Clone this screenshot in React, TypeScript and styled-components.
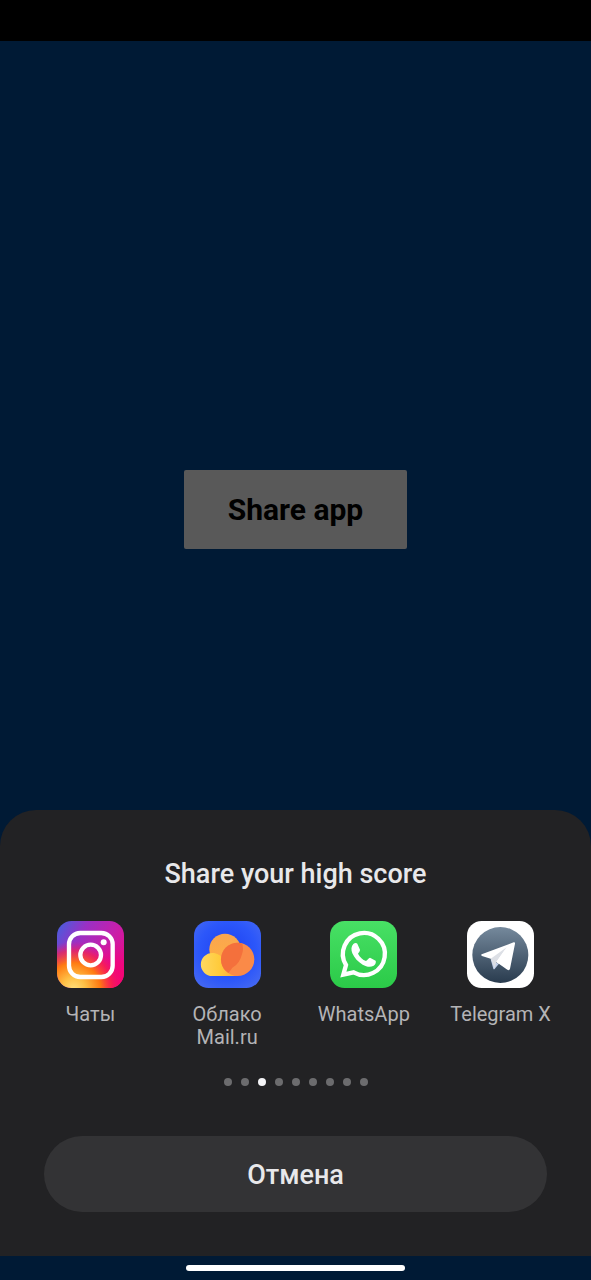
import React from 'react';
import styled, { createGlobalStyle } from 'styled-components';

const GlobalStyle = createGlobalStyle`
  *, *::before, *::after { box-sizing: border-box; }
  body {
    margin: 0;
    background: #001a35;
    font-family: Roboto, 'Noto Sans', sans-serif;
  }
  button { font-family: inherit; border: 0; cursor: pointer; }
`;

const Screen = styled.div`
  display: flex;
  flex-direction: column;
  min-height: 100vh;
`;

const StatusBar = styled.header`
  height: 41px;
  background: #000;
`;

const Page = styled.main`
  flex: 1;
  display: flex;
  align-items: center;
  justify-content: center;
  padding-top: 168px;
`;

const ShareButton = styled.button`
  padding: 21px 44px;
  border-radius: 2px;
  background: #595959;
  color: #000;
  font-size: 30px;
  font-weight: 700;
  line-height: 37px;
`;

const Sheet = styled.section`
  display: flex;
  flex-direction: column;
  padding: 48px 22px 44px;
  border-radius: 36px 36px 0 0;
  background: #222224;
`;

const Title = styled.h2`
  margin: 0 0 31px;
  color: #e8e8ea;
  font-size: 27px;
  font-weight: 500;
  line-height: 32px;
  text-align: center;
`;

const AppGrid = styled.div`
  display: grid;
  grid-template-columns: repeat(4, 1fr);
`;

const AppButton = styled.button`
  display: flex;
  flex-direction: column;
  align-items: center;
  gap: 15px;
  padding: 0;
  background: none;
  color: #b4b4b6;
  font-size: 20px;
  line-height: 23px;
`;

const AppLabel = styled.span`
  max-width: 112px;
`;

const AppIcon = styled.svg`
  display: block;
  width: 67px;
  height: 67px;
`;

const Dots = styled.div`
  display: flex;
  justify-content: center;
  gap: 9px;
  margin: 29px 0 50px;
`;

const Dot = styled.span<{ $active: boolean }>`
  width: 8px;
  height: 8px;
  border-radius: 50%;
  background: ${(p) => (p.$active ? '#f4f4f6' : '#6c6c6e')};
`;

const CancelButton = styled.button`
  margin: 0 22px;
  padding: 23px 24px 21px;
  border-radius: 38px;
  background: #333335;
  color: #e8e8ea;
  font-size: 27px;
  font-weight: 500;
  line-height: 32px;
`;

const NavBar = styled.footer`
  display: flex;
  align-items: center;
  justify-content: center;
  height: 24px;
`;

const NavHandle = styled.div`
  width: 37%;
  height: 6px;
  border-radius: 3px;
  background: #fff;
`;

const box = '35 30 201 201';

const ChatsIcon = () => (
  <AppIcon viewBox={box} aria-hidden="true">
    <defs>
      <linearGradient id="ig-base" x1="0" y1="0" x2="1" y2="0.6">
        <stop offset="0" stopColor="#3f62e0" />
        <stop offset="0.35" stopColor="#9a30c4" />
        <stop offset="0.7" stopColor="#c71fab" />
        <stop offset="1" stopColor="#e40d8c" />
      </linearGradient>
      <radialGradient id="ig-pink" cx="0.85" cy="0.95" r="0.65">
        <stop offset="0" stopColor="#fb0566" />
        <stop offset="0.5" stopColor="#f3047c" stopOpacity="0.85" />
        <stop offset="1" stopColor="#e0108f" stopOpacity="0" />
      </radialGradient>
      <radialGradient id="ig-warm" cx="0.25" cy="1.02" r="0.72">
        <stop offset="0" stopColor="#ffdf7c" />
        <stop offset="0.25" stopColor="#ffc045" />
        <stop offset="0.55" stopColor="#ff7a12" />
        <stop offset="0.8" stopColor="#f9244a" stopOpacity="0.7" />
        <stop offset="1" stopColor="#e0148a" stopOpacity="0" />
      </radialGradient>
    </defs>
    <rect x="35" y="30" width="201" height="201" rx="44" fill="url(#ig-base)" />
    <rect x="35" y="30" width="201" height="201" rx="44" fill="url(#ig-pink)" />
    <rect x="35" y="30" width="201" height="201" rx="44" fill="url(#ig-warm)" />
    <rect x="71" y="66" width="131" height="132" rx="34" fill="none" stroke="#fff" strokeWidth="13" />
    <circle cx="136" cy="132" r="31" fill="none" stroke="#fff" strokeWidth="13" />
    <circle cx="175" cy="94" r="9" fill="#fff" />
  </AppIcon>
);

const CloudIcon = () => (
  <AppIcon viewBox={box} aria-hidden="true">
    <defs>
      <radialGradient id="cl-bg" cx="0.5" cy="0.45" r="0.72">
        <stop offset="0" stopColor="#1c3ff0" />
        <stop offset="0.6" stopColor="#2c57fa" />
        <stop offset="1" stopColor="#4a6cf0" />
      </radialGradient>
      <linearGradient id="cl-top" x1="0" y1="0" x2="0" y2="1">
        <stop offset="0" stopColor="#faa550" />
        <stop offset="1" stopColor="#ffb040" />
      </linearGradient>
      <linearGradient id="cl-left" x1="0" y1="0" x2="1" y2="0">
        <stop offset="0" stopColor="#ffd860" />
        <stop offset="0.5" stopColor="#ffcb3c" />
        <stop offset="1" stopColor="#ffa43c" />
      </linearGradient>
      <clipPath id="cl-clip">
        <path d="M100 80H174Q186 108 180 126Q172 160 150 170Q142 184 128 195H100Z" />
      </clipPath>
    </defs>
    <rect x="35" y="30" width="201" height="201" rx="44" fill="url(#cl-bg)" />
    <circle cx="128" cy="115" r="47" fill="url(#cl-top)" />
    <path d="M90 126a34 34 0 0 0 0 69h76v-25l-42-25c-8-12-20-19-34-19Z" fill="url(#cl-left)" />
    <circle cx="166" cy="145" r="50" fill="#fa8a48" />
    <circle cx="166" cy="145" r="50" fill="#f4703c" clipPath="url(#cl-clip)" />
  </AppIcon>
);

const WhatsAppIcon = () => (
  <AppIcon viewBox={box} aria-hidden="true">
    <defs>
      <linearGradient id="wa-bg" x1="0" y1="0" x2="0" y2="1">
        <stop offset="0" stopColor="#48e065" />
        <stop offset="1" stopColor="#2bca48" />
      </linearGradient>
    </defs>
    <rect x="35" y="30" width="201" height="201" rx="44" fill="url(#wa-bg)" />
    <path
      d="M75 191 83 162A63 63 0 1 1 106 184Z"
      fill="none"
      stroke="#fff"
      strokeWidth="13"
      strokeLinejoin="miter"
    />
    <path
      d="M105 99c4-4 10-4 12-1l8 18c1 4-5 9-6 12 6 11 14 18 24 22 4-2 8-10 12-10l17 9c2 5-1 12-6 15-10 6-22 3-33-3-14-8-25-20-31-34-4-11-4-21 3-28Z"
      fill="#fff"
    />
  </AppIcon>
);

const TelegramIcon = () => (
  <AppIcon viewBox={box} aria-hidden="true">
    <defs>
      <linearGradient id="tg-bg" x1="0" y1="0" x2="0" y2="1">
        <stop offset="0" stopColor="#75899c" />
        <stop offset="1" stopColor="#293b4e" />
      </linearGradient>
    </defs>
    <rect x="35" y="30" width="201" height="201" rx="44" fill="#fff" />
    <circle cx="135" cy="132" r="84" fill="url(#tg-bg)" />
    <path d="M106 145 114 173q1 3 4 1L130 159Z" fill="#c3d2ec" />
    <path
      d="M79 130 175 94q5-1 4 4L164 173q-2 7-8 3L123 153 106 143 80 135q-4-3-1-5Z"
      fill="#fff"
    />
    <path d="M106 143 154 109 123 153 118 172Z" fill="#dcdfe5" />
    <path d="M154 109 123 153 131 159Z" fill="#fff" />
  </AppIcon>
);

const apps = [
  { label: 'Чаты', Icon: ChatsIcon },
  { label: 'Облако Mail.ru', Icon: CloudIcon },
  { label: 'WhatsApp', Icon: WhatsAppIcon },
  { label: 'Telegram X', Icon: TelegramIcon },
];

const PAGE_COUNT = 9;
const ACTIVE_PAGE = 2;

export default function App() {
  return (
    <>
      <GlobalStyle />
      <Screen>
        <StatusBar />
        <Page>
          <ShareButton type="button">Share app</ShareButton>
        </Page>
        <Sheet role="dialog" aria-labelledby="sheet-title">
          <Title id="sheet-title">Share your high score</Title>
          <AppGrid>
            {apps.map(({ label, Icon }) => (
              <AppButton key={label} type="button">
                <Icon />
                <AppLabel>{label}</AppLabel>
              </AppButton>
            ))}
          </AppGrid>
          <Dots>
            {Array.from({ length: PAGE_COUNT }, (_, i) => (
              <Dot key={i} $active={i === ACTIVE_PAGE} />
            ))}
          </Dots>
          <CancelButton type="button">Отмена</CancelButton>
        </Sheet>
        <NavBar>
          <NavHandle />
        </NavBar>
      </Screen>
    </>
  );
}
